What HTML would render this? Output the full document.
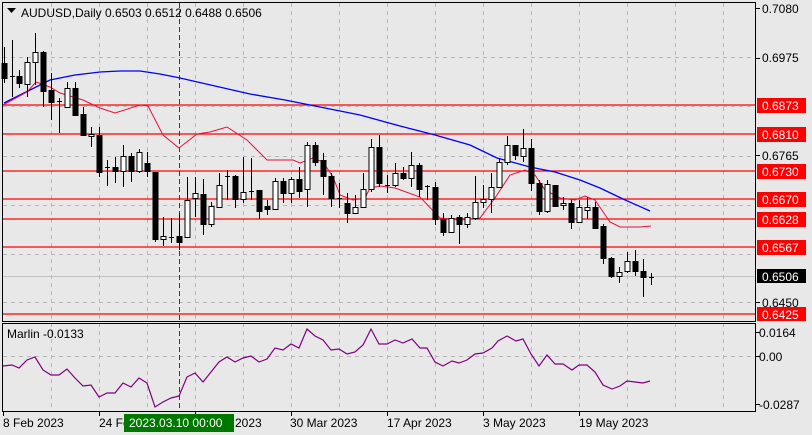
<!DOCTYPE html>
<html><head><meta charset="utf-8"><style>
html,body{margin:0;padding:0;background:#e8e8e8;}
svg{display:block;font-family:"Liberation Sans",sans-serif;font-size:12px;}
</style></head><body>
<svg width="812" height="435" viewBox="0 0 812 435" xmlns="http://www.w3.org/2000/svg">
<rect width="812" height="435" fill="#e8e8e8"/>
<!-- grid -->
<g stroke="#b8b8b8" stroke-dasharray="4,4" stroke-width="1">
<path d="M3 57.5H755M3 106.5H755M3 156.5H755M3 205.5H755M3 254.5H755M3 302.5H755M3 356.5H755"/>
<path d="M51.5 3V321M99.5 3V321M147.5 3V321M195.5 3V321M243.5 3V321M291.5 3V321M339.5 3V321M387.5 3V321M435.5 3V321M483.5 3V321M531.5 3V321M579.5 3V321M627.5 3V321M675.5 3V321M723.5 3V321"/>
<path d="M51.5 323V411M99.5 323V411M147.5 323V411M195.5 323V411M243.5 323V411M291.5 323V411M339.5 323V411M387.5 323V411M435.5 323V411M483.5 323V411M531.5 323V411M579.5 323V411M627.5 323V411M675.5 323V411M723.5 323V411"/>
</g>
<!-- current price line -->
<path d="M3 276.5H755" stroke="#c0c0c0"/>
<!-- red levels -->
<g stroke="#ff0000" stroke-width="1.3">
<path d="M3 105H755M3 134H755M3 171H755M3 199H755M3 219H755M3 247H755M3 314H755"/>
</g>
<!-- green vertical -->
<path d="M179.5 3V411" stroke="#006400" stroke-dasharray="5,3"/>
<!-- MAs -->
<polyline fill="none" stroke="#0000ff" stroke-width="1.3" points="4,103 30,90 50,80 75,75 100,72 120,71 140,71 160,74 180,78 215,86 250,94 285,100 320,107 360,115 400,126 435,135 470,145 497,158 530,167 555,172 580,180 600,188 623,199 650,211"/>
<polyline fill="none" stroke="#e8103a" stroke-width="1" points="3,105 27,92 36,82 50,87 60,93 83,100 100,108 115,113 140,105 148,106 163,135 179,148 197,134 210,132 227,127 247,140 267,160 293,160 300,163 313,158 323,162 333,177 340,195 353,200 365,198 370,188 380,186 395,188 420,197 440,218 460,220 480,218 495,198 510,175 525,170 535,175 545,190 560,198 575,200 585,196 595,200 610,222 620,227 640,227 651,226"/>
<!-- candles -->
<g id="c" stroke="#000" stroke-width="1"></g>
<path stroke="#000" stroke-width="1" fill="none" d="
M4.5 47V83M12.5 40V97M19.5 70V88M27.5 57V97M35.5 33V85M43.5 51V107M51.5 73V120M59.5 98V133M67.5 82V108M75.5 82V116M83.5 107V135M91.5 127V147M99.5 127V177M107.5 160V186M115.5 157V183M123.5 145V187M131.5 153V182M139.5 149V173M147.5 152V177M155.5 172V242M163.5 217V246M171.5 218V243M179.5 213V250M187.5 177V237M195.5 177V217M203.5 179V235M211.5 202V227M219.5 173V208M227.5 170V200M235.5 175V208M243.5 157V203M251.5 158V200M259.5 190V219M267.5 200V215M275.5 178V210M283.5 178V203M291.5 177V203M299.5 167V198M307.5 142V207M315.5 142V166M323.5 153V195M331.5 173V207M339.5 183V208M347.5 193V223M355.5 195V214M363.5 173V208M371.5 139V192M379.5 135V187M387.5 175V193M395.5 163V187M403.5 167V180M411.5 152V187M419.5 163V197M427.5 185V200M435.5 182V225M443.5 213V236M451.5 215V233M459.5 215V244M467.5 213V228M475.5 176V220M483.5 185V208M491.5 173V213M499.5 158V188M507.5 136V165M515.5 145V160M523.5 129V162M531.5 139V191M539.5 180V215M547.5 180V213M555.5 185V207M563.5 197V210M571.5 200V229M579.5 200V223M587.5 197V219M595.5 202V229M603.5 224V264M611.5 257V278M619.5 267V283M627.5 252V273M635.5 250V276M643.5 259V297M651.5 273V285
M10 76.5H15M57 101.5H62M105 167.5H110M169 237.5H174M225 176.5H230M249 191.5H254M337 198.5H342M385 185.5H390M425 186.5H430M649 277.5H654"/>
<g stroke="#000" stroke-width="1" fill="#000">
<rect x="2" y="63.5" width="5" height="15"/><rect x="17" y="76.5" width="5" height="7"/><rect x="41" y="52.5" width="5" height="39"/><rect x="49" y="90.5" width="5" height="12"/><rect x="73" y="88.5" width="5" height="27"/><rect x="81" y="114.5" width="5" height="21"/><rect x="97" y="135.5" width="5" height="37"/><rect x="113" y="167.5" width="5" height="4"/><rect x="129" y="156.5" width="5" height="15"/><rect x="145" y="163.5" width="5" height="8"/><rect x="153" y="172.5" width="5" height="67"/><rect x="177" y="236.5" width="5" height="6"/><rect x="201" y="194.5" width="5" height="30"/><rect x="233" y="176.5" width="5" height="23"/><rect x="257" y="190.5" width="5" height="21"/><rect x="265" y="206.5" width="5" height="3"/><rect x="281" y="181.5" width="5" height="12"/><rect x="297" y="179.5" width="5" height="12"/><rect x="313" y="145.5" width="5" height="17"/><rect x="321" y="160.5" width="5" height="16"/><rect x="329" y="176.5" width="5" height="22"/><rect x="345" y="203.5" width="5" height="10"/><rect x="377" y="147.5" width="5" height="36"/><rect x="401" y="173.5" width="5" height="5"/><rect x="417" y="165.5" width="5" height="24"/><rect x="433" y="187.5" width="5" height="32"/><rect x="441" y="219.5" width="5" height="13"/><rect x="457" y="217.5" width="5" height="7"/><rect x="513" y="145.5" width="5" height="10"/><rect x="529" y="148.5" width="5" height="35"/><rect x="537" y="183.5" width="5" height="28"/><rect x="553" y="185.5" width="5" height="21"/><rect x="569" y="203.5" width="5" height="19"/><rect x="593" y="207.5" width="5" height="21"/><rect x="601" y="226.5" width="5" height="32"/><rect x="609" y="258.5" width="5" height="18"/><rect x="633" y="261.5" width="5" height="10"/><rect x="641" y="271.5" width="5" height="6"/>
</g>
<g stroke="#000" stroke-width="1" fill="#fff">
<rect x="25" y="62.5" width="5" height="22"/><rect x="33" y="52.5" width="5" height="10"/><rect x="65" y="88.5" width="5" height="19"/><rect x="89" y="134.5" width="5" height="2"/><rect x="121" y="156.5" width="5" height="15"/><rect x="137" y="152.5" width="5" height="19"/><rect x="161" y="236.5" width="5" height="3"/><rect x="185" y="200.5" width="5" height="37"/><rect x="193" y="193.5" width="5" height="5"/><rect x="209" y="206.5" width="5" height="18"/><rect x="217" y="185.5" width="5" height="22"/><rect x="241" y="192.5" width="5" height="7"/><rect x="273" y="181.5" width="5" height="28"/><rect x="289" y="179.5" width="5" height="14"/><rect x="305" y="145.5" width="5" height="44"/><rect x="353" y="207.5" width="5" height="6"/><rect x="361" y="189.5" width="5" height="18"/><rect x="369" y="147.5" width="5" height="42"/><rect x="393" y="173.5" width="5" height="12"/><rect x="409" y="165.5" width="5" height="13"/><rect x="449" y="218.5" width="5" height="14"/><rect x="465" y="217.5" width="5" height="7"/><rect x="473" y="202.5" width="5" height="16"/><rect x="481" y="199.5" width="5" height="3"/><rect x="489" y="187.5" width="5" height="12"/><rect x="497" y="162.5" width="5" height="25"/><rect x="505" y="145.5" width="5" height="17"/><rect x="521" y="148.5" width="5" height="8"/><rect x="545" y="184.5" width="5" height="27"/><rect x="561" y="203.5" width="5" height="2"/><rect x="577" y="207.5" width="5" height="15"/><rect x="585" y="207.5" width="5" height="3"/><rect x="617" y="272.5" width="5" height="4"/><rect x="625" y="261.5" width="5" height="10"/>
</g>
<!-- indicator -->
<polyline fill="none" stroke="#800080" stroke-width="1.2" points="3,366 12,365 19,368 27,360 35,357 43,370 51,375 59,375 67,369 75,378 83,386 91,385 99,397 107,393 115,393 123,383 131,387 139,378 147,383 155,407 163,402 171,398 179,396 187,377 195,373 203,382 211,372 219,362 227,357 235,362 243,358 251,356 259,362 267,359 275,348 283,350 291,344 299,348 307,329 315,336 323,340 331,350 339,349 347,354 355,352 363,345 371,329 379,344 387,344 395,340 403,343 412,339 420,348 427,348 435,362 443,366 452,361 459,363 467,360 475,354 483,353 492,348 498,341 507,336 516,341 523,339 531,354 539,366 547,355 555,364 563,364 572,370 579,365 587,365 595,372 603,385 612,389 620,386 627,381 635,382 643,383 650,381"/>
<!-- panel borders -->
<g fill="none" stroke="#000" stroke-width="1">
<rect x="2.5" y="2.5" width="753" height="319"/>
<rect x="2.5" y="323.5" width="753" height="88"/>
<path d="M755 8.5H760M755 58.5H760M755 155.5H760M755 302.5H760M755 332.5H760M755 356.5H760M755 404.5H760"/>
<path d="M3.5 411V416M99.5 411V416M195.5 411V416M291.5 411V416M387.5 411V416M483.5 411V416M579.5 411V416"/>
</g>
<!-- header -->
<path d="M7 8h9l-4.5 5z" fill="#000"/>
<text x="21" y="17" fill="#000">AUDUSD,Daily  0.6503 0.6512 0.6488 0.6506</text>
<text x="7" y="338" fill="#000">Marlin -0.0133</text>
<!-- right axis -->
<g fill="#000">
<text x="762" y="13">0.7080</text>
<text x="762" y="62">0.6975</text>
<text x="762" y="160">0.6765</text>
<text x="762" y="307">0.6450</text>
<text x="759" y="337">0.0164</text>
<text x="759" y="361">0.00</text>
<text x="759" y="409">-0.0287</text>
</g>
<g fill="#ff0000">
<rect x="757" y="98" width="49" height="15"/>
<rect x="757" y="127" width="49" height="15"/>
<rect x="757" y="164" width="49" height="15"/>
<rect x="757" y="192" width="49" height="15"/>
<rect x="757" y="212" width="49" height="15"/>
<rect x="757" y="240" width="49" height="15"/>
<rect x="757" y="307" width="49" height="14"/>
</g>
<rect x="757" y="269" width="49" height="14" fill="#000"/>
<g fill="#fff">
<text x="762" y="110">0.6873</text>
<text x="762" y="139">0.6810</text>
<text x="762" y="176">0.6730</text>
<text x="762" y="204">0.6670</text>
<text x="762" y="224">0.6628</text>
<text x="762" y="252">0.6567</text>
<text x="762" y="281">0.6506</text>
<text x="762" y="319">0.6425</text>
</g>
<!-- date axis -->
<g fill="#000">
<text x="3" y="427">8 Feb 2023</text>
<text x="99" y="427">24 Feb 2023</text>
<text x="235" y="427">2023</text>
<text x="290" y="427">30 Mar 2023</text>
<text x="387" y="427">17 Apr 2023</text>
<text x="483" y="427">3 May 2023</text>
<text x="579" y="427">19 May 2023</text>
</g>
<rect x="124" y="414" width="110" height="18" fill="#007800"/>
<text x="129" y="427" fill="#fff">2023.03.10 00:00</text>
</svg>
</body></html>
